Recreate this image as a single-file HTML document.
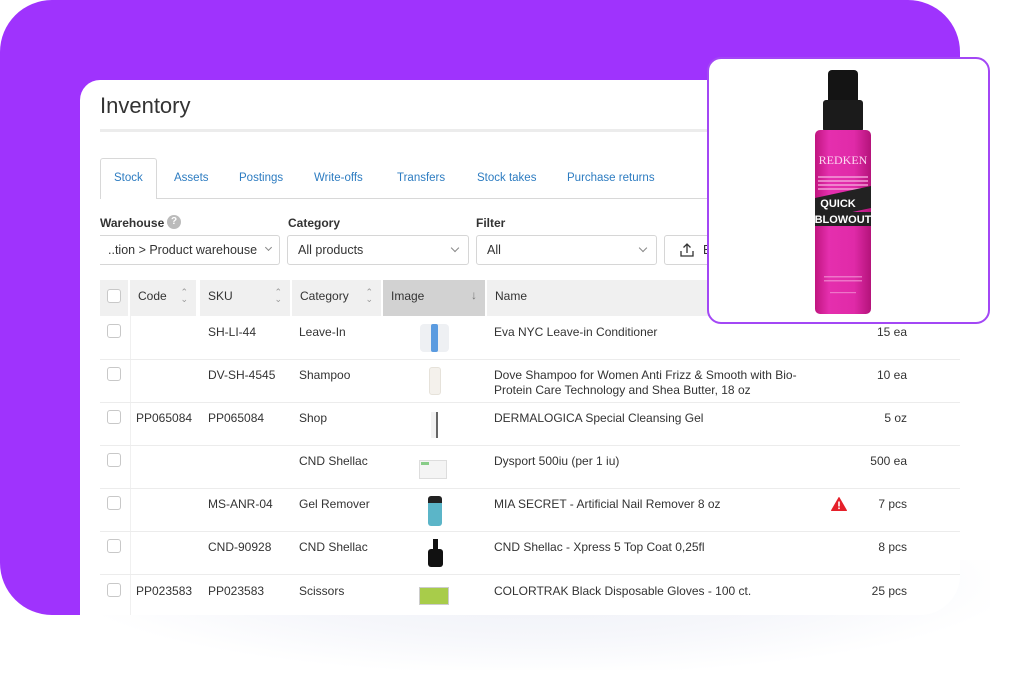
<!DOCTYPE html>
<html><head><meta charset="utf-8"><style>
*{margin:0;padding:0;box-sizing:border-box}
body{width:1020px;height:688px;background:#fff;position:relative;overflow:hidden;font-family:"Liberation Sans",sans-serif;font-size:12px;color:#333}
.a{position:absolute}
.purple{left:0;top:0;width:960px;height:615px;background:#9f33fd;border-radius:52px}
.shadow{left:90px;top:560px;width:900px;height:110px;background:radial-gradient(ellipse at 50% 20%,#eef0f6 0%,#f6f7fb 45%,rgba(255,255,255,0) 75%)}
.card{left:80px;top:80px;width:880px;height:535px;background:#fff;border-radius:20px 0 40px 0;overflow:hidden}
.tab{top:172px;color:#2d7cc1;font-size:11.5px}
.lbl{top:216px;font-weight:bold;font-size:12px;color:#333}
.sel{top:235px;height:30px;border:1px solid #d6d6d6;border-radius:3px;padding:7px 10px;font-size:12.5px;color:#333;background:#fff}
.chev{position:absolute;right:10px;top:9px;width:6px;height:6px;border-right:1px solid #888;border-bottom:1px solid #888;transform:rotate(45deg)}
.hd{top:280px;height:36px;background:#f0f0f0;border-right:2px solid #fff;padding:9px 8px;font-size:12px}
.sort{position:absolute;right:8px;top:9px;color:#999;font-size:9px;line-height:7px}
.row{left:100px;width:860px;height:1px;background:#ececec}
.cb{width:14px;height:14px;border:1px solid #c8c8c8;border-radius:3px;background:#fff}
.t{font-size:12px;color:#333;white-space:nowrap}
.q{right:113px;text-align:right}
</style></head><body>
<div class="a purple"></div>
<div class="a shadow"></div>
<div class="a card"></div>

<div class="a" style="left:100px;top:93px;font-size:22px;color:#333">Inventory</div>
<div class="a" style="left:100px;top:129px;width:860px;height:3px;background:#ececec"></div>

<div class="a" style="left:100px;top:198px;width:860px;height:1px;background:#d8d8d8"></div>
<div class="a" style="left:100px;top:158px;width:57px;height:41px;border:1px solid #d8d8d8;border-bottom:none;border-radius:3px 3px 0 0;background:#fff"></div>
<div class="a tab" style="left:114px">Stock</div>
<div class="a tab" style="left:174px">Assets</div>
<div class="a tab" style="left:239px">Postings</div>
<div class="a tab" style="left:314px">Write-offs</div>
<div class="a tab" style="left:397px">Transfers</div>
<div class="a tab" style="left:477px">Stock takes</div>
<div class="a tab" style="left:567px">Purchase returns</div>

<div class="a lbl" style="left:100px">Warehouse</div>
<div class="a" style="left:167px;top:215px;width:14px;height:14px;border-radius:50%;background:#bbb;color:#fff;font-size:10px;text-align:center;line-height:14px;font-weight:bold">?</div>
<div class="a lbl" style="left:288px">Category</div>
<div class="a lbl" style="left:476px">Filter</div>
<div class="a sel" style="left:100px;width:180px;border-left:none;border-radius:0 3px 3px 0;padding-left:8px">..tion &gt; Product warehouse<span class="chev" style="right:8px;width:5px;height:5px"></span></div>
<div class="a sel" style="left:287px;width:182px">All products<span class="chev"></span></div>
<div class="a sel" style="left:476px;width:181px">All<span class="chev"></span></div>
<div class="a sel" style="left:664px;width:60px">
<svg class="a" style="left:14px;top:6px" width="16" height="16" viewBox="0 0 16 16" fill="none" stroke="#333" stroke-width="1.3"><path d="M8 11V2M4.5 5.5L8 2l3.5 3.5M2 9v5h12V9"/></svg>
<span class="a" style="left:38px;top:7px">E</span></div>

<div class="a hd" style="left:100px;width:30px"><div class="cb" style="margin:0 0 0 -1px"></div></div>
<div class="a hd" style="left:130px;width:68px">Code<span class="sort">⌃<br>⌄</span></div>
<div class="a hd" style="left:200px;width:92px">SKU<span class="sort">⌃<br>⌄</span></div>
<div class="a hd" style="left:292px;width:91px">Category<span class="sort">⌃<br>⌄</span></div>
<div class="a hd" style="left:383px;width:104px;background:#d2d2d2">Image<span class="a" style="right:8px;top:8px;color:#777;font-size:12px">↓</span></div>
<div class="a hd" style="left:487px;width:473px;border-right:none">Name</div>
<div class="a" style="left:130px;top:316px;width:1px;height:299px;background:#f0f0f0"></div>

<div class="a row" style="top:359px"></div>
<div class="a row" style="top:402px"></div>
<div class="a row" style="top:445px"></div>
<div class="a row" style="top:488px"></div>
<div class="a row" style="top:531px"></div>
<div class="a row" style="top:574px"></div>

<div class="a cb" style="left:107px;top:324px"></div>
<div class="a cb" style="left:107px;top:367px"></div>
<div class="a cb" style="left:107px;top:410px"></div>
<div class="a cb" style="left:107px;top:453px"></div>
<div class="a cb" style="left:107px;top:496px"></div>
<div class="a cb" style="left:107px;top:539px"></div>
<div class="a cb" style="left:107px;top:583px"></div>

<div class="a t" style="left:136px;top:411px">PP065084</div>
<div class="a t" style="left:136px;top:584px">PP023583</div>

<div class="a t" style="left:208px;top:325px">SH-LI-44</div>
<div class="a t" style="left:208px;top:368px">DV-SH-4545</div>
<div class="a t" style="left:208px;top:411px">PP065084</div>
<div class="a t" style="left:208px;top:497px">MS-ANR-04</div>
<div class="a t" style="left:208px;top:540px">CND-90928</div>
<div class="a t" style="left:208px;top:584px">PP023583</div>

<div class="a t" style="left:299px;top:325px">Leave-In</div>
<div class="a t" style="left:299px;top:368px">Shampoo</div>
<div class="a t" style="left:299px;top:411px">Shop</div>
<div class="a t" style="left:299px;top:454px">CND Shellac</div>
<div class="a t" style="left:299px;top:497px">Gel Remover</div>
<div class="a t" style="left:299px;top:540px">CND Shellac</div>
<div class="a t" style="left:299px;top:584px">Scissors</div>

<div class="a" style="left:420px;top:324px;width:29px;height:28px;background:#eef0f3;border-radius:4px"></div>
<div class="a" style="left:431px;top:324px;width:7px;height:28px;background:#5a9be0;border-radius:2px"></div>
<div class="a" style="left:429px;top:367px;width:12px;height:28px;background:#f4f1ec;border:1px solid #e6e2da;border-radius:3px"></div>
<div class="a" style="left:431px;top:412px;width:7px;height:26px;background:#f2f2f2;border-right:2px solid #666"></div>
<div class="a" style="left:419px;top:460px;width:28px;height:19px;background:#f4f4f4;border:1px solid #ddd"></div>
<div class="a" style="left:421px;top:462px;width:8px;height:3px;background:#8c8"></div>
<div class="a" style="left:428px;top:496px;width:14px;height:30px;background:#5bb5c8;border-radius:3px;border-top:7px solid #222"></div>
<div class="a" style="left:433px;top:539px;width:5px;height:10px;background:#111"></div>
<div class="a" style="left:428px;top:549px;width:15px;height:18px;background:#111;border-radius:3px"></div>
<div class="a" style="left:419px;top:587px;width:30px;height:18px;background:#a8cc4a;border:1px solid #ccc"></div>

<div class="a t" style="left:494px;top:325px">Eva NYC Leave-in Conditioner</div>
<div class="a t" style="left:494px;top:368px;line-height:15px">Dove Shampoo for Women Anti Frizz &amp; Smooth with Bio-<br>Protein Care Technology and Shea Butter, 18 oz</div>
<div class="a t" style="left:494px;top:411px">DERMALOGICA Special Cleansing Gel</div>
<div class="a t" style="left:494px;top:454px">Dysport 500iu (per 1 iu)</div>
<div class="a t" style="left:494px;top:497px">MIA SECRET - Artificial Nail Remover 8 oz</div>
<div class="a t" style="left:494px;top:540px">CND Shellac - Xpress 5 Top Coat 0,25fl</div>
<div class="a t" style="left:494px;top:584px">COLORTRAK Black Disposable Gloves - 100 ct.</div>

<svg class="a" style="left:831px;top:497px" width="16" height="14" viewBox="0 0 16 14"><path d="M8 0.5L15.5 13.5H0.5Z" fill="#e5202a" stroke="#e5202a" stroke-linejoin="round"/><rect x="7.2" y="4.5" width="1.6" height="5" fill="#fff"/><rect x="7.2" y="10.5" width="1.6" height="1.6" fill="#fff"/></svg>

<div class="a t q" style="top:325px">15 ea</div>
<div class="a t q" style="top:368px">10 ea</div>
<div class="a t q" style="top:411px">5 oz</div>
<div class="a t q" style="top:454px">500 ea</div>
<div class="a t q" style="top:497px">7 pcs</div>
<div class="a t q" style="top:540px">8 pcs</div>
<div class="a t q" style="top:584px">25 pcs</div>

<div class="a" style="left:707px;top:57px;width:283px;height:267px;background:#fff;border:2px solid #a347f5;border-radius:14px"></div>
<svg class="a" style="left:810px;top:68px" width="66" height="248" viewBox="0 0 66 248">
<defs><linearGradient id="g" x1="0" x2="1"><stop offset="0" stop-color="#c0157f"/><stop offset=".25" stop-color="#e52fae"/><stop offset=".7" stop-color="#e02aa8"/><stop offset="1" stop-color="#b4137a"/></linearGradient></defs>
<rect x="18" y="2" width="30" height="34" rx="4" fill="#141414"/>
<rect x="13" y="32" width="40" height="32" rx="3" fill="#1b1b1b"/>
<rect x="5" y="62" width="56" height="184" rx="5" fill="url(#g)"/>
<text x="33" y="96" font-family="Liberation Serif,serif" font-size="12" fill="#fbd6ef" text-anchor="middle">REDKEN</text>
<g fill="#f5a6dc" opacity=".7"><rect x="8" y="108" width="50" height="2"/><rect x="8" y="112" width="50" height="2"/><rect x="8" y="116" width="50" height="2"/><rect x="8" y="120" width="50" height="2"/></g>
<polygon points="5,130 61,118 61,140 5,152" fill="#222"/>
<text x="28" y="139" font-family="Liberation Sans,sans-serif" font-weight="bold" font-size="11" fill="#fff" text-anchor="middle">QUICK</text>
<rect x="5" y="144" width="56" height="14" fill="#222"/>
<text x="33" y="155" font-family="Liberation Sans,sans-serif" font-weight="bold" font-size="11" fill="#fff" text-anchor="middle">BLOWOUT</text>
<g fill="#f5a6dc" opacity=".6"><rect x="14" y="208" width="38" height="1.5"/><rect x="14" y="212" width="38" height="1.5"/><rect x="20" y="224" width="26" height="1.2"/></g>
</svg>
</body></html>
